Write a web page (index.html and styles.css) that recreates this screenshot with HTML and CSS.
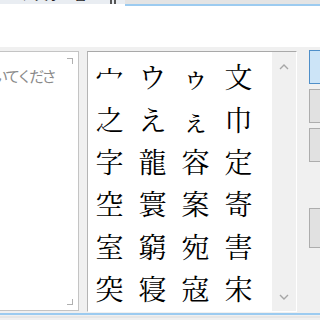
FILE: index.html
```
<!DOCTYPE html>
<html lang="ja">
<head>
  <meta charset="UTF-8">
  <title>手書き</title>
  <link rel="stylesheet" href="styles.css">
</head>
<body>

  <div class="topbar">
    <div class="caption"><span>ここに文字を書いてください</span><i class="sep"></i><i class="sep"></i></div>
    <div class="strip"></div>
  </div>

  <div class="blank"></div>

  <div class="main">
    <div class="pad">
      <div class="hint">いてくださ</div>
      <i class="mark tr"></i>
      <i class="mark br"></i>
    </div>

    <div class="list">
      <div class="cands">
        <div class="cand">宀</div><div class="cand">ウ</div><div class="cand">ゥ</div><div class="cand">文</div>
        <div class="cand">之</div><div class="cand">え</div><div class="cand">ぇ</div><div class="cand">巾</div>
        <div class="cand">字</div><div class="cand">龍</div><div class="cand">容</div><div class="cand">定</div>
        <div class="cand">空</div><div class="cand">寰</div><div class="cand">案</div><div class="cand">寄</div>
        <div class="cand">室</div><div class="cand">窮</div><div class="cand">宛</div><div class="cand">害</div>
        <div class="cand">突</div><div class="cand">寝</div><div class="cand">寇</div><div class="cand">宋</div>
      </div>
      <div class="scroll">
        <svg width="10" height="6" viewBox="0 0 10 6"><path d="M1 5 L5 1 L9 5" fill="none" stroke="#a6a6a6" stroke-width="1.4"/></svg>
        <svg width="10" height="6" viewBox="0 0 10 6"><path d="M1 1 L5 5 L9 1" fill="none" stroke="#a6a6a6" stroke-width="1.4"/></svg>
      </div>
    </div>

    <div class="buttons">
      <div class="btn active"></div>
      <div class="btn"></div>
      <div class="btn"></div>
      <div class="btn gap"></div>
    </div>
  </div>

  <div class="footer"></div>

</body>
</html>
```

FILE: styles.css
```
body {
  margin: 0;
  width: 320px;
  height: 320px;
  overflow: hidden;
  background-color: #f0f0f0;
  font-family: "Noto Sans CJK JP", sans-serif;
}

.topbar {
  display: flex;
  height: 6px;
  background-color: #fff;
}

.caption {
  display: flex;
  width: 125px;
  height: 4px;
  overflow: hidden;
  background-color: #e9edf2;
}

.caption span {
  font-size: 13px;
  line-height: 16px;
  margin-top: -14px;
  margin-left: -4px;
  white-space: nowrap;
  color: #222;
  width: 112px;
  overflow: hidden;
}

.sep {
  width: 2px;
  height: 4px;
  margin-left: 2px;
  background-color: #555;
}

.strip {
  flex: 1;
  height: 4px;
  background-color: #e4e4e4;
  border-bottom: 2px solid #9ccbf0;
}

.blank {
  height: 41px;
  background-color: #fff;
}

.main {
  display: flex;
  gap: 8px;
  height: 262px;
  padding-top: 4px;
}

.pad {
  position: relative;
  flex: none;
  width: 96px;
  height: 258px;
  margin-left: -19px;
  background-color: #fff;
  border: 1px solid #c4c4c4;
  overflow: hidden;
}

.hint {
  margin-top: 15px;
  margin-left: 11px;
  font-size: 15px;
  line-height: 18px;
  letter-spacing: -2.6px;
  color: #8a8a8a;
  white-space: nowrap;
}

.mark {
  position: absolute;
  width: 5px;
  height: 5px;
  border-color: #b0b0b0;
  border-style: solid;
}

.mark.tr {
  top: 6px;
  right: 5px;
  border-width: 1px 1px 0 0;
}

.mark.br {
  bottom: 5px;
  right: 5px;
  border-width: 0 1px 1px 0;
}

.list {
  display: flex;
  flex: none;
  width: 208px;
  height: 259px;
  border-top: 1px solid #a9a9a9;
  border-left: 1px solid #b4b4b4;
  border-right: 1px solid #fff;
  border-bottom: 1px solid #fff;
}

.cands {
  display: grid;
  grid-template-columns: repeat(4, 43px);
  grid-auto-rows: 42.4px;
  align-content: start;
  width: 184px;
  padding-top: 3px;
  background-color: #fff;
}

.cand {
  display: flex;
  align-items: center;
  justify-content: center;
  font-family: "Noto Serif CJK JP", "Noto Sans CJK JP", serif;
  font-size: 28px;
  color: #000;
}

.scroll {
  display: flex;
  flex-direction: column;
  justify-content: space-between;
  align-items: center;
  width: 24px;
  padding: 12px 0 11px;
  background-color: #f0f0f0;
}

.buttons {
  display: flex;
  flex-direction: column;
  gap: 5px;
  margin-left: 4px;
  margin-top: -1px;
}

.btn {
  width: 40px;
  height: 32px;
  background-color: #e1e1e1;
  border: 1px solid #adadad;
}

.btn.active {
  background-color: #cce4f7;
  border-color: #4f8fc9;
}

.btn.gap {
  margin-top: 41px;
  height: 38px;
}

.footer {
  height: 1px;
  border-top: 2px solid #9ccbf0;
  border-bottom: 2px solid #e6e6e6;
}
```
